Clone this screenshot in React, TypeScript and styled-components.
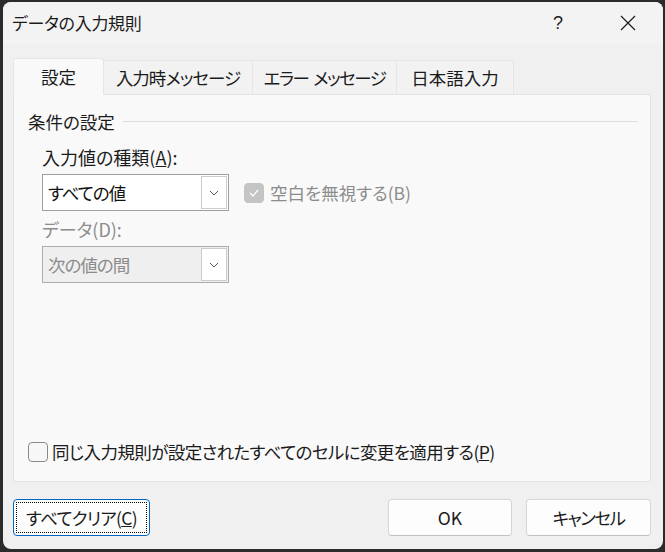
import React from "react";
import styled, { createGlobalStyle } from "styled-components";

const Global = createGlobalStyle`
  html, body { margin: 0; padding: 0; background: #2b2b2b; }
  body { width: 665px; height: 552px; overflow: hidden; }
  * { box-sizing: border-box; }
`;

const FONT = `"Noto Sans CJK JP", "Noto Sans", sans-serif`;
const SIZE = "17.5px";

const Window = styled.div`
  margin: 2px 0 0 3px;
  width: 660px;
  height: 547px;
  border-radius: 8px;
  background: #f0f0f0;
  overflow: hidden;
  display: flex;
  flex-direction: column;
  font-family: ${FONT};
  font-feature-settings: "palt";
  color: #1b1b1b;
`;

const TitleBar = styled.div`
  height: 42px;
  flex: none;
  background: #f3f3f3;
  display: flex;
  align-items: center;
  padding-left: 9px;
`;

const Title = styled.div`
  flex: 1;
  font-size: 17px;
  line-height: 20px;
  letter-spacing: -0.3px;
`;

const CaptionButton = styled.div`
  width: 70px;
  height: 42px;
  display: flex;
  align-items: center;
  justify-content: center;
  font-size: 18px;
  font-family: "Liberation Sans", sans-serif;
  color: #1b1b1b;
`;

const Body = styled.div`
  flex: 1;
  display: flex;
  flex-direction: column;
  padding: 14px 12px 13px 10px;
`;

const TabStrip = styled.div`
  display: flex;
  align-items: flex-end;
  height: 36px;
  flex: none;
  position: relative;
  z-index: 1;
`;

const Tab = styled.div<{ $w: number; $active?: boolean; $ls?: number }>`
  width: ${(p) => p.$w}px;
  height: ${(p) => (p.$active ? 37 : 34)}px;
  margin-bottom: ${(p) => (p.$active ? -1 : 0)}px;
  display: flex;
  align-items: center;
  justify-content: center;
  padding-bottom: ${(p) => (p.$active ? 1 : 0)}px;
  font-size: ${SIZE};
  line-height: 20px;
  letter-spacing: ${(p) => p.$ls ?? 0}px;
  white-space: pre;
  background: ${(p) => (p.$active ? "#f9f9f9" : "#f2f2f2")};
  border: 1px solid #e5e5e5;
  border-bottom: none;
  border-left: ${(p) => (p.$active ? "1px solid #e5e5e5" : "none")};
  border-radius: ${(p) => (p.$active ? "3px 3px 0 0" : "0")};
`;

const Panel = styled.div`
  height: 388px;
  flex: none;
  background: #f9f9f9;
  border: 1px solid #e3e3e3;
  border-radius: 0 0 3px 3px;
  display: flex;
  flex-direction: column;
  padding: 17px 12px 19px 14px;
`;

const GroupHeader = styled.div`
  display: flex;
  align-items: center;
  gap: 8px;
  height: 20px;
  font-size: ${SIZE};
  line-height: 20px;
`;

const GroupLine = styled.div`
  flex: 1;
  height: 1px;
  background: #dedede;
  margin-top: -1px;
`;

const Section = styled.div`
  display: flex;
  flex-direction: column;
  padding-left: 14px;
`;

const FieldLabel = styled.div<{ $disabled?: boolean; $top: number }>`
  margin-top: ${(p) => p.$top}px;
  height: 20px;
  line-height: 20px;
  font-size: 18px;
  color: ${(p) => (p.$disabled ? "#8c8c8c" : "#1b1b1b")};
`;

const Row = styled.div`
  display: flex;
  align-items: center;
  margin-top: 7px;
`;

const Combo = styled.div<{ $disabled?: boolean }>`
  width: 187px;
  height: 37px;
  border: 1px solid ${(p) => (p.$disabled ? "#adadad" : "#9f9f9f")};
  background: ${(p) => (p.$disabled ? "#efefef" : "#ffffff")};
  display: flex;
  align-items: center;
  padding: 1px 1px 1px 5px;
`;

const ComboText = styled.div<{ $disabled?: boolean }>`
  flex: 1;
  font-size: ${SIZE};
  line-height: 20px;
  letter-spacing: -1px;
  color: ${(p) => (p.$disabled ? "#8c8c8c" : "#111111")};
`;

const ComboButton = styled.div`
  width: 26px;
  height: 100%;
  background: #ffffff;
  border: 1px solid #cccccc;
  display: flex;
  align-items: center;
  justify-content: center;
`;

const CheckBox = styled.div<{ $checked?: boolean }>`
  width: 20px;
  height: 20px;
  border-radius: 4px;
  flex: none;
  display: flex;
  align-items: center;
  justify-content: center;
  background: ${(p) => (p.$checked ? "#c4c4c4" : "#f7f7f7")};
  border: 1px solid ${(p) => (p.$checked ? "#c4c4c4" : "#8a8a8a")};
`;

const CheckLabel = styled.div<{ $disabled?: boolean; $ls?: number }>`
  font-size: ${SIZE};
  line-height: 20px;
  letter-spacing: ${(p) => p.$ls ?? 0}px;
  color: ${(p) => (p.$disabled ? "#8c8c8c" : "#1b1b1b")};
`;

const BlankRow = styled.div`
  display: flex;
  align-items: center;
  gap: 6px;
  margin-left: 15px;
`;

const ApplyRow = styled.div`
  margin-top: auto;
  display: flex;
  align-items: center;
  gap: 4px;
`;

const ButtonRow = styled.div`
  display: flex;
  margin-top: 17px;
  height: 37px;
  gap: 14px;
`;

const Button = styled.div<{ $w: number; $focus?: boolean; $ls?: number }>`
  width: ${(p) => p.$w}px;
  height: 37px;
  border-radius: 4px;
  background: #fdfdfd;
  border: 1px solid ${(p) => (p.$focus ? "#0067c0" : "#d6d6d6")};
  border-bottom-color: ${(p) => (p.$focus ? "#0067c0" : "#c2c2c2")};
  display: flex;
  align-items: center;
  justify-content: center;
  font-size: ${SIZE};
  line-height: 20px;
  letter-spacing: ${(p) => p.$ls ?? 0}px;
  color: #1b1b1b;
  position: relative;
`;

const FocusRing = styled.div`
  position: absolute;
  inset: 2px;
  border: 1px dotted #000000;
`;

const Spacer = styled.div`
  flex: 1;
`;

const Chevron = () => (
  <svg width="10" height="6" viewBox="0 0 10 6">
    <path d="M1 1 L5 5 L9 1" fill="none" stroke="#555" strokeWidth="1" />
  </svg>
);

export default function App() {
  return (
    <>
      <Global />
      <Window>
        <TitleBar>
          <Title>データの入力規則</Title>
          <CaptionButton>?</CaptionButton>
          <CaptionButton>
            <svg width="16" height="16" viewBox="0 0 16 16">
              <path d="M1 1 L15 15 M15 1 L1 15" stroke="#1b1b1b" strokeWidth="1.2" />
            </svg>
          </CaptionButton>
        </TitleBar>
        <Body>
          <TabStrip>
            <Tab $w={91} $active>設定</Tab>
            <Tab $w={149} $ls={-1}>入力時メッセージ</Tab>
            <Tab $w={144} $ls={-1.5}>{"エラー  メッセージ"}</Tab>
            <Tab $w={117}>日本語入力</Tab>
          </TabStrip>
          <Panel>
            <GroupHeader>
              <span>条件の設定</span>
              <GroupLine />
            </GroupHeader>
            <Section>
              <FieldLabel $top={15}>
                入力値の種類(<u>A</u>):
              </FieldLabel>
              <Row>
                <Combo>
                  <ComboText>すべての値</ComboText>
                  <ComboButton>
                    <Chevron />
                  </ComboButton>
                </Combo>
                <BlankRow>
                  <CheckBox $checked>
                    <svg width="12" height="10" viewBox="0 0 12 10">
                      <path d="M2 5 L5 8 L10 2" fill="none" stroke="#ffffff" strokeWidth="1.2" />
                    </svg>
                  </CheckBox>
                  <CheckLabel $disabled>空白を無視する(B)</CheckLabel>
                </BlankRow>
              </Row>
              <FieldLabel $top={8} $disabled>
                データ(D):
              </FieldLabel>
              <Row>
                <Combo $disabled>
                  <ComboText $disabled>次の値の間</ComboText>
                  <ComboButton>
                    <Chevron />
                  </ComboButton>
                </Combo>
              </Row>
            </Section>
            <ApplyRow>
              <CheckBox />
              <CheckLabel $ls={-0.6}>
                同じ入力規則が設定されたすべてのセルに変更を適用する(<u>P</u>)
              </CheckLabel>
            </ApplyRow>
          </Panel>
          <ButtonRow>
            <Button $w={137} $focus $ls={-0.7}>
              <FocusRing />
              すべてクリア(<u>C</u>)
            </Button>
            <Spacer />
            <Button $w={124}>OK</Button>
            <Button $w={125} $ls={-1.5}>キャンセル</Button>
          </ButtonRow>
        </Body>
      </Window>
    </>
  );
}
